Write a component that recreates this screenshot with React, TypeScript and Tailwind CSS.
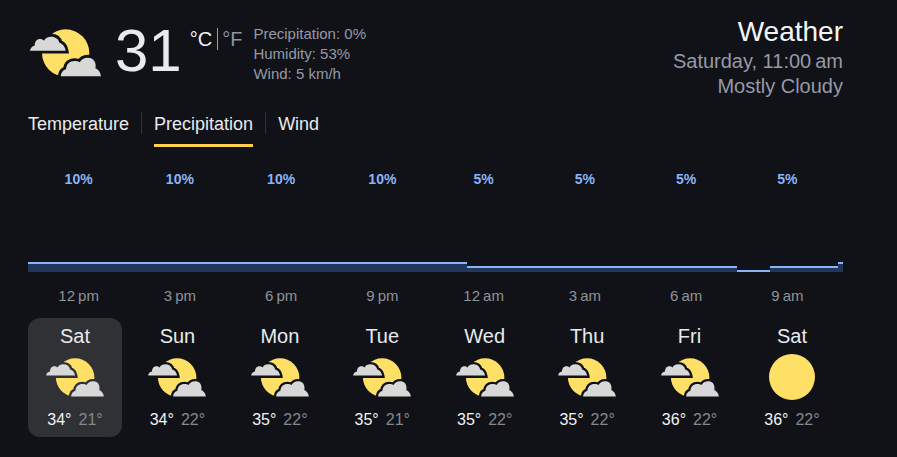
import { useId } from "react";

const hours = [
  { time: "12\u202fpm", chance: 10 },
  { time: "3\u202fpm", chance: 10 },
  { time: "6\u202fpm", chance: 10 },
  { time: "9\u202fpm", chance: 10 },
  { time: "12\u202fam", chance: 5 },
  { time: "3\u202fam", chance: 5 },
  { time: "6\u202fam", chance: 5 },
  { time: "9\u202fam", chance: 5 },
];

const segments = [
  { span: 439, height: 10 },
  { span: 270, height: 6 },
  { span: 33, height: 2 },
  { span: 68, height: 6 },
  { span: 5, height: 10 },
];

const days = [
  { name: "Sat", high: 34, low: 21, icon: "cloudy" },
  { name: "Sun", high: 34, low: 22, icon: "cloudy" },
  { name: "Mon", high: 35, low: 22, icon: "cloudy" },
  { name: "Tue", high: 35, low: 21, icon: "cloudy" },
  { name: "Wed", high: 35, low: 22, icon: "cloudy" },
  { name: "Thu", high: 35, low: 22, icon: "cloudy" },
  { name: "Fri", high: 36, low: 22, icon: "cloudy" },
  { name: "Sat", high: 36, low: 22, icon: "sunny" },
];

const SMALL_CLOUD =
  "M0 65C1 57 6 51 14 50C14 38 21 30 30 30C35 30 39 32 42 35C46 27 54 23 63 23C76 23 86 30 89 42C98 44 105 53 107 65Z";
const LARGE_CLOUD =
  "M92 142C93 131 99 123 108 121C109 105 119 96 134 96C140 96 145 97 149 100C154 91 162 86 173 86C188 86 197 96 197 110C197 113 197 115 196 118C205 121 212 131 213 142Z";

function PartlyCloudy({ className }: { className: string }) {
  const id = useId();
  return (
    <svg viewBox="0 0 213 144" className={className} role="img" aria-label="Mostly cloudy">
      <mask id={id} maskUnits="userSpaceOnUse" x="0" y="0" width="213" height="144">
        <rect width="213" height="144" fill="white" />
        <path d={SMALL_CLOUD} fill="black" stroke="black" strokeWidth="17" />
        <path d={LARGE_CLOUD} fill="black" stroke="black" strokeWidth="17" />
      </mask>
      <circle cx="107" cy="72" r="71" fill="#ffe066" mask={`url(#${id})`} />
      <path d={SMALL_CLOUD} fill="#d8d8d8" />
      <path d={LARGE_CLOUD} fill="#d8d8d8" />
    </svg>
  );
}

function Sunny({ className }: { className: string }) {
  return (
    <svg viewBox="0 0 46 46" className={className} role="img" aria-label="Sunny">
      <circle cx="23" cy="23" r="23" fill="#ffe066" />
    </svg>
  );
}

function Tab({ label, active = false }: { label: string; active?: boolean }) {
  return (
    <button
      type="button"
      role="tab"
      aria-selected={active}
      className={`h-[35px] border-b-3 pb-[9px] text-[18px] leading-[22px] text-[#e8eaed] ${
        active ? "border-[#ffd04f]" : "border-transparent"
      }`}
    >
      {label}
    </button>
  );
}

export default function App() {
  return (
    <main className="min-h-screen bg-[#101217] pt-[15px] pr-[54px] pb-5 pl-7 font-['Liberation_Sans',Arial,sans-serif]">
      <header className="flex h-[84px] items-start">
        <PartlyCloudy className="mt-[14px] ml-[2px] h-12 w-[71px] shrink-0" />
        <div className="ml-[14px] pt-1 text-[60px] leading-[64px] text-[#e8eaed]">31</div>
        <div className="mt-[13px] ml-2 flex items-center text-[20px] leading-[22px]">
          <button type="button" className="border-r border-[#9aa0a6] pr-[5px] text-[#f4f5f8]">
            °C
          </button>
          <button type="button" className="pl-1 text-[#8f94a3]">
            °F
          </button>
        </div>
        <div className="mt-[9px] ml-[11px] text-[15px] leading-5 text-[#9599a8]">
          <div>Precipitation: 0%</div>
          <div>Humidity: 53%</div>
          <div>Wind: 5 km/h</div>
        </div>
        <div className="ml-auto text-right text-[20px] leading-[25px] text-[#9599a8]">
          <h1 className="text-[28px] leading-[34px] text-[#f4f5f8]">Weather</h1>
          <div>Saturday, 11:00{"\u202f"}am</div>
          <div>Mostly Cloudy</div>
        </div>
      </header>

      <div role="tablist" className="mt-[13px] flex items-start gap-3">
        <Tab label="Temperature" />
        <div className="h-[22px] w-px bg-[#303238]" />
        <Tab label="Precipitation" active />
        <div className="h-[22px] w-px bg-[#303238]" />
        <Tab label="Wind" />
      </div>

      <section aria-label="Hourly precipitation">
        <div className="mt-[22px] mr-[5px] grid grid-cols-8 text-center text-[14px] leading-5 font-bold text-[#8ab4f8]">
          {hours.map((h) => (
            <div key={h.time}>{h.chance}%</div>
          ))}
        </div>
        <div className="mt-[73px] flex h-[10px] items-end">
          {segments.map((s, i) => (
            <div
              key={i}
              className="basis-0 border-t-2 border-[#8ab4f8] bg-[#20365c]"
              style={{ flexGrow: s.span, height: s.height }}
            />
          ))}
        </div>
        <div className="mt-[14px] mr-[5px] grid grid-cols-8 text-center text-[15px] leading-5 text-[#8f9297]">
          {hours.map((h) => (
            <div key={h.time}>{h.time}</div>
          ))}
        </div>
      </section>

      <section aria-label="Daily forecast" className="mt-3 mr-1 flex justify-between">
        {days.map((d, i) => (
          <button
            type="button"
            key={i}
            className={`flex w-[94px] flex-col items-center rounded-xl pt-[6px] pb-[7px] ${
              i === 0 ? "bg-[#303134]" : ""
            }`}
          >
            <span className="text-[20px] leading-6 text-[#e8eaed]">{d.name}</span>
            <span className="mt-[6px] flex h-[46px] items-center">
              {d.icon === "sunny" ? (
                <Sunny className="size-[46px]" />
              ) : (
                <PartlyCloudy className="h-[39px] w-[58px]" />
              )}
            </span>
            <span className="mt-[10px] flex gap-[7px] text-[16px] leading-5">
              <span className="text-[#f1f3f4]">{d.high}°</span>
              <span className="text-[#85888d]">{d.low}°</span>
            </span>
          </button>
        ))}
      </section>
    </main>
  );
}
